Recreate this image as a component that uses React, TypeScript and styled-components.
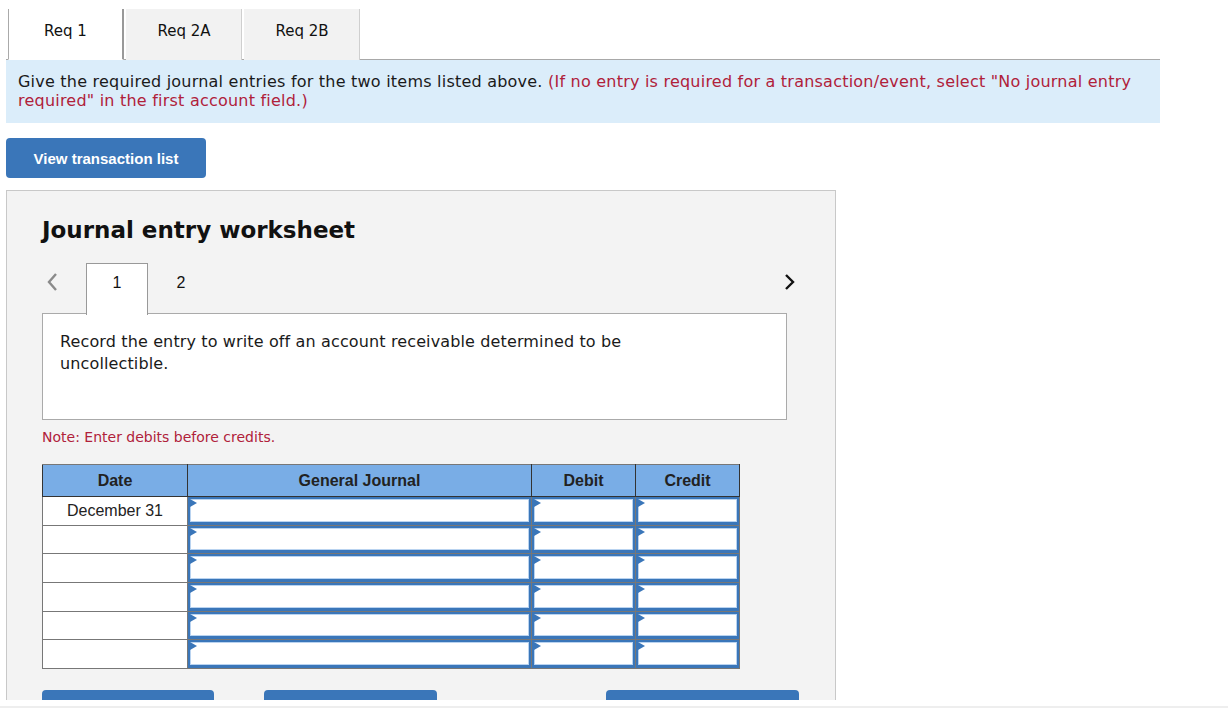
import React from 'react'
import styled, { createGlobalStyle } from 'styled-components'

const GlobalStyle = createGlobalStyle`
  body {
    margin: 0;
    background: #fff;
    font-family: Verdana, "DejaVu Sans", sans-serif;
    color: #111;
  }
`

const rows = [
  { date: 'December 31', h: 28 },
  { date: '', h: 27 },
  { date: '', h: 28 },
  { date: '', h: 28 },
  { date: '', h: 27 },
  { date: '', h: 28 },
]

const Viewport = styled.div`
  height: 700px;
  overflow: hidden;
  padding-left: 6px;
`

const BottomRule = styled.div`
  margin-top: 6px;
  height: 2px;
  background: #eeeeee;
`

const TabBar = styled.div`
  display: flex;
  width: 1152px;
  height: 50px;
  margin-top: 9px;
  padding-left: 2px;
  box-sizing: content-box;
  border-bottom: 1px solid #a8a8a8;
  gap: 2px;
`

const Tab = styled.div<{ $active?: boolean }>`
  width: 116px;
  height: 51px;
  display: flex;
  justify-content: center;
  padding-top: 13px;
  font-size: 15px;
  line-height: 18px;
  box-sizing: border-box;
  background: ${({ $active }) => ($active ? '#fff' : '#f2f2f2')};
  border-left: 1px solid ${({ $active }) => ($active ? '#aaa' : 'transparent')};
  border-right: ${({ $active }) =>
    $active ? '2px solid #999' : '1px solid #cfcfcf'};
  border-bottom: ${({ $active }) => ($active ? '1px solid #fff' : 'none')};
`

const Instructions = styled.div`
  width: 1154px;
  box-sizing: border-box;
  background: #dbedfa;
  padding: 12px 12px 13px;
  font-size: 16px;
  line-height: 19px;
  letter-spacing: 0.22px;
  color: #1a1a1a;
`

const Red = styled.span`
  color: #b0213a;
`

const PrimaryButton = styled.button<{ $width?: number }>`
  width: ${({ $width }) => $width || 200}px;
  height: 40px;
  border: none;
  border-radius: 4px;
  background: #3a76b9;
  color: #fff;
  font-family: "Liberation Sans", Arial, sans-serif;
  font-weight: bold;
  font-size: 15px;
  padding: 0;
`

const ViewButton = styled(PrimaryButton)`
  margin-top: 15px;
`

const Panel = styled.div`
  margin-top: 12px;
  width: 830px;
  box-sizing: border-box;
  background: #f3f3f3;
  border: 1px solid #c8c8c8;
  padding: 25px 0 30px 35px;
`

const Title = styled.h2`
  margin: 0;
  font-size: 23px;
  font-weight: bold;
  line-height: 28px;
  color: #111;
`

const EntryNav = styled.div`
  display: flex;
  width: 754px;
  margin-top: 19px;
  height: 51px;
`

const Chevron = styled.div<{ $dim?: boolean }>`
  width: 44px;
  height: 38px;
  display: flex;
  align-items: center;
  justify-content: ${({ $dim }) => ($dim ? 'flex-start' : 'flex-end')};
  padding-left: ${({ $dim }) => ($dim ? '4px' : '0')};
  box-sizing: border-box;
`

const EntryTab = styled.div<{ $active?: boolean }>`
  width: ${({ $active }) => ($active ? '62px' : '66px')};
  height: 52px;
  box-sizing: border-box;
  display: flex;
  justify-content: center;
  padding-top: 9px;
  font-family: "Liberation Sans", Arial, sans-serif;
  font-size: 16px;
  line-height: 20px;
  background: ${({ $active }) => ($active ? '#fff' : 'transparent')};
  border: 1px solid ${({ $active }) => ($active ? '#999' : 'transparent')};
  border-bottom: none;
  position: relative;
  z-index: 1;
`

const Spacer = styled.div`
  flex: 1;
`

const Description = styled.div`
  width: 745px;
  height: 107px;
  margin-top: -1px;
  box-sizing: border-box;
  background: #fff;
  border: 1px solid #aaa;
  padding: 17px 17px;
  font-size: 16px;
  line-height: 22px;
  letter-spacing: 0.13px;
  color: #1a1a1a;
`

const DescText = styled.p`
  margin: 0;
  width: 620px;
`

const Note = styled.div`
  margin-top: 9px;
  font-size: 14px;
  line-height: 17px;
  color: #b0213a;
`

const Grid = styled.table`
  margin-top: 18px;
  border-collapse: collapse;
  width: 697px;
  table-layout: fixed;
  font-family: "Liberation Sans", Arial, sans-serif;
  border: 1px solid #777;
`

const Head = styled.th`
  background: #79ade6;
  height: 31px;
  padding: 0;
  font-size: 16px;
  font-weight: bold;
  color: #222;
  border: 1px solid #333;
  border-top-color: #777;
`

const DateCell = styled.td<{ $h: number }>`
  background: #fff;
  height: ${({ $h }) => $h}px;
  padding: 0;
  text-align: center;
  font-size: 16px;
  color: #222;
  border: 1px solid #777;
`

const InputCell = styled.td`
  padding: 0;
  border: 1px solid #777;
  background: #fff;
`

const Field = styled.div<{ $h: number }>`
  position: relative;
  height: ${({ $h }) => $h}px;
  box-sizing: border-box;
  border: 2px solid #3a76b9;
  border-bottom-width: 3px;
  background: #fff;
  box-shadow: inset 0 0 0 1px #b9d3f0;
  &::before {
    content: '';
    position: absolute;
    left: 0;
    top: 0;
    border-style: solid;
    border-width: 4px 0 4px 7px;
    border-color: transparent transparent transparent #3a76b9;
  }
`

const Actions = styled.div`
  display: flex;
  margin-top: 21px;
  gap: 50px;
`

const ActionButton = styled(PrimaryButton)`
  &:last-child {
    margin-left: 119px;
  }
`

const ChevronLeft = () => (
  <svg width="12" height="20" viewBox="0 0 12 20">
    <path d="M10 2 L3 10 L10 18" fill="none" stroke="#8a8a8a" strokeWidth="2.4" />
  </svg>
)

const ChevronRight = () => (
  <svg width="12" height="18" viewBox="0 0 12 18">
    <path d="M2 2 L9 9 L2 16" fill="none" stroke="#111" strokeWidth="2.4" />
  </svg>
)

export default function App() {
  return (
    <>
      <GlobalStyle />
      <Viewport>
        <TabBar>
          <Tab $active>Req 1</Tab>
          <Tab>Req 2A</Tab>
          <Tab>Req 2B</Tab>
        </TabBar>
        <Instructions>
          Give the required journal entries for the two items listed above.{' '}
          <Red>
            (If no entry is required for a transaction/event, select "No
            journal entry required" in the first account field.)
          </Red>
        </Instructions>
        <ViewButton>View transaction list</ViewButton>
        <Panel>
          <Title>Journal entry worksheet</Title>
          <EntryNav>
            <Chevron $dim>
              <ChevronLeft />
            </Chevron>
            <EntryTab $active>1</EntryTab>
            <EntryTab>2</EntryTab>
            <Spacer />
            <Chevron>
              <ChevronRight />
            </Chevron>
          </EntryNav>
          <Description>
            <DescText>
              Record the entry to write off an account receivable determined to
              be uncollectible.
            </DescText>
          </Description>
          <Note>Note: Enter debits before credits.</Note>
          <Grid>
            <colgroup>
              <col style={{ width: 145 }} />
              <col style={{ width: 344 }} />
              <col style={{ width: 104 }} />
              <col style={{ width: 104 }} />
            </colgroup>
            <thead>
              <tr>
                <Head>Date</Head>
                <Head>General Journal</Head>
                <Head>Debit</Head>
                <Head>Credit</Head>
              </tr>
            </thead>
            <tbody>
              {rows.map((row, i) => (
                <tr key={i}>
                  <DateCell $h={row.h}>{row.date}</DateCell>
                  <InputCell>
                    <Field $h={row.h} />
                  </InputCell>
                  <InputCell>
                    <Field $h={row.h} />
                  </InputCell>
                  <InputCell>
                    <Field $h={row.h} />
                  </InputCell>
                </tr>
              ))}
            </tbody>
          </Grid>
          <Actions>
            <ActionButton $width={172}>Record entry</ActionButton>
            <ActionButton $width={173}>Clear entry</ActionButton>
            <ActionButton $width={193}>View general journal</ActionButton>
          </Actions>
        </Panel>
      </Viewport>
      <BottomRule />
    </>
  )
}
